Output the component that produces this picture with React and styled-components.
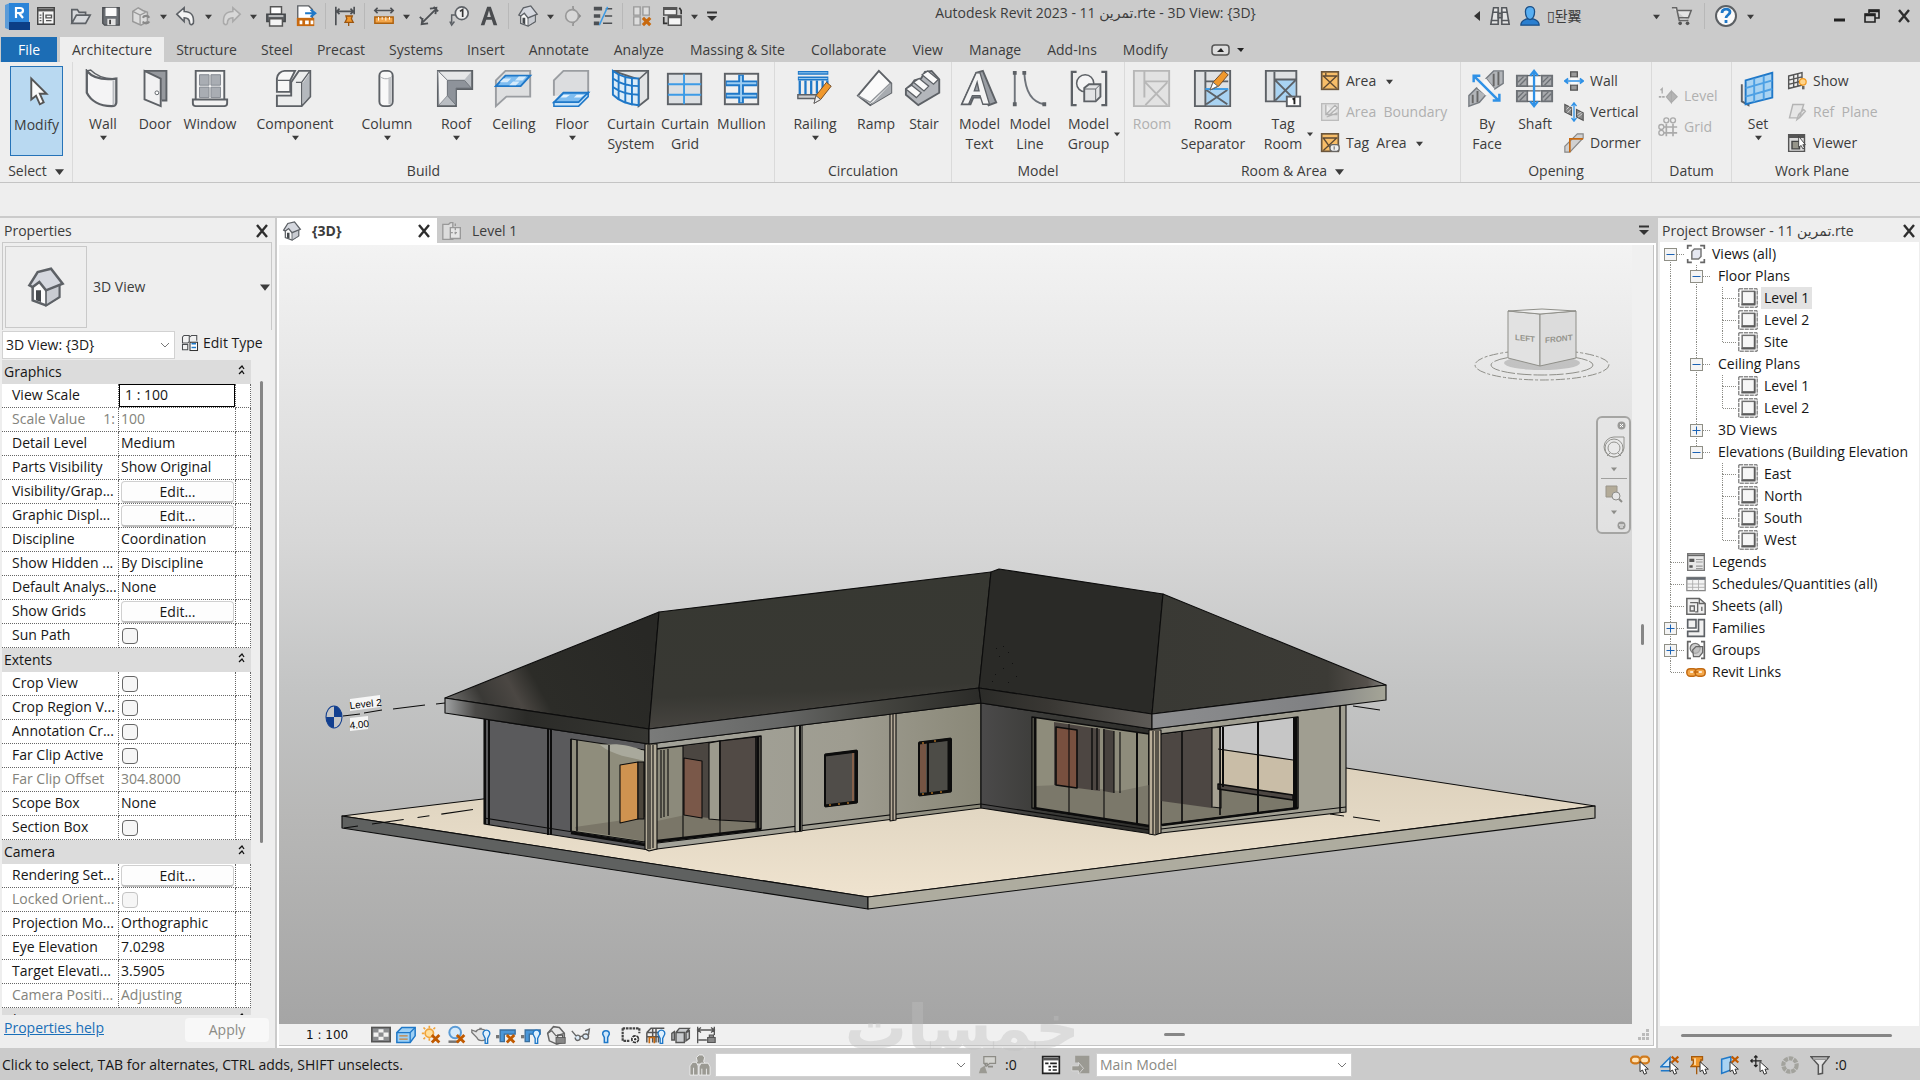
import React, { useState } from "react";
import styled, { createGlobalStyle } from "styled-components";

const GlobalStyle = createGlobalStyle`
  * { box-sizing: border-box; }
  body {
    margin: 0;
    background: #cbcbcb;
    color: #3c3c3c;
    font-family: "Open Sans", "Noto Sans", "DejaVu Sans", "Noto Sans CJK KR", sans-serif;
    font-size: 14px;
    line-height: 20px;
  }
  button, select, input {
    font: inherit;
    color: inherit;
    margin: 0;
  }
  svg { display: block; flex: none; }
`;

/* ---------- icons ---------- */

const G = "#5d6166";
const B = "#1f78c8";
const LB = "#9ccdf2";
const O = "#c8690f";

const cross = <path d="M13 12l9 9M22 12l-9 9" stroke="#c05a00" strokeWidth="3.4" />;
const bulb = <path d="M15 12a4 4 0 1 1 7 0l-2 4v6h-3v-6z" fill="#dff0fd" stroke={B} strokeWidth="1.6" />;
const cursor = <path d="M12 8v12l3-2 2 5 3-1-2-5h4z" fill="#fff" stroke="#333" strokeWidth="1.2" />;
const pencil = (
  <>
    <path d="M20 36l2-8L33 14l5 4-11 14z" fill="#f0982c" stroke="#6d4a2a" />
    <path d="M20 36l2-8 5 4z" fill="#eee" stroke={G} />
  </>
);

const big = {
  modify: <path d="M15 9v22l5-4 4 9 4-2-4-9h7z" fill="#fafafa" stroke="#555" strokeWidth="2" />,
  wall: (
    <>
      <path d="M4 2c7 8 17 10 31 8v25c0 3-2 4-5 4C17 39 8 33 4 25z" fill="#f4f4f5" stroke={G} strokeWidth="2.4" />
      <path d="M32 12v26" stroke="#b9bcc0" strokeWidth="2" />
      <path d="M4 2l4-1c7 7 15 10 27 9" fill="none" stroke={G} strokeWidth="1.5" />
    </>
  ),
  door: (
    <>
      <path d="M10 2h23v31h-5" fill="#96999e" stroke={G} strokeWidth="2" />
      <path d="M10 2l17 8v29L10 32z" fill="#f1f1f2" stroke={G} strokeWidth="2" />
      <circle cx="23" cy="25" r="2" fill="#fff" stroke={G} />
    </>
  ),
  window: (
    <>
      <path d="M6 2h30v31H6z" fill="#f6f6f6" stroke={G} strokeWidth="2" />
      <path d="M10 6h10v11H10zM22 6h10v11H22zM10 19h10v11H10zM22 19h10v11H22z" fill="#a9adb3" stroke="#83888f" />
      <path d="M3 32h36v4c0 2-1 3-3 3H6c-2 0-3-1-3-3z" fill="#f2f2f2" stroke={G} strokeWidth="2" />
    </>
  ),
  component: (
    <>
      <path d="M2 39V28h15V14l8-12h12v27l-9 10z" fill="#eceded" stroke={G} strokeWidth="2" />
      <path d="M2 24V10c0-4 4-8 8-8h11l-5 10v12z" fill="#f7f7f7" stroke={G} strokeWidth="2" />
      <path d="M29 15l7-10v24l-7 8z" fill="#b4b8bd" />
      <path d="M3 12h13M22 14h6l8-11M28 14v25" fill="none" stroke={G} strokeWidth="1.4" />
    </>
  ),
  column: (
    <>
      <rect x="13" y="2" width="14" height="37" rx="5" fill="#f8f8f8" stroke={G} strokeWidth="2" />
      <path d="M14 8c3 3 9 3 12 0" fill="none" stroke="#a2a5aa" />
      <path d="M24 9v28" stroke="#c3c5c8" strokeWidth="3" />
    </>
  ),
  roof: (
    <>
      <path d="M2 2h36v19H21v18H2z" fill="#b9bdc2" stroke={G} strokeWidth="2" />
      <path d="M2 2l10 10v16L3 38z" fill="#f3f3f3" stroke="#888c92" />
      <path d="M12 12h18l7 8H21v18l-9-10z" fill="#8e939a" stroke="#71767c" />
      <path d="M4 3h33l-7 8H12z" fill="#e6e7e8" />
    </>
  ),
  ceiling: (
    <>
      <path d="M2 12L12 2h26v27H13L2 39z" fill="#dedfe0" stroke="#9a9da1" strokeWidth="2" />
      <path d="M12 7h26L28 18H2z" fill="#7fbdf0" stroke={B} strokeWidth="2" />
      <path d="M10 10h8l-4 4H6zM26 8h8l-4 4h-8zM20 13h7l-4 4h-7z" fill="#d6ebfb" />
    </>
  ),
  floor: (
    <>
      <path d="M2 28V12L12 2h26v25" fill="#dcdddf" stroke="#9a9da1" strokeWidth="2" />
      <path d="M12 25h26L28 35H2z" fill="#7fbdf0" stroke={B} strokeWidth="2" />
      <path d="M2 35h26l10-10v4L28 39H2z" fill="#c8e4fa" stroke={B} strokeWidth="1.6" />
      <path d="M12 27h7l-4 3H9zM26 27h8l-4 3h-7z" fill="#e3f2fd" />
    </>
  ),
  curtainSystem: (
    <>
      <path d="M2 2h37v29l-10 8V11z" fill="#e3e4e5" stroke={G} strokeWidth="2" />
      <path d="M2 2c8 6 16 8 27 8v28C16 37 8 33 2 27z" fill="#dcecf8" stroke={B} strokeWidth="2" />
      <path d="M2 10c8 6 16 8 27 8M2 19c8 6 16 8 27 8M8 6v26M15 9v27M22 10v28" fill="none" stroke={B} strokeWidth="2" />
      <path d="M29 11l10-9" stroke={G} strokeWidth="1.6" />
    </>
  ),
  curtainGrid: (
    <>
      <rect x="3" y="5" width="35" height="32" fill="#dcdfe2" stroke={G} strokeWidth="2" />
      <path d="M3 16h35M3 27h35M20 5v32" stroke="#3c9be6" strokeWidth="2" />
    </>
  ),
  mullion: (
    <>
      <rect x="3" y="5" width="35" height="32" fill="#f0f0f0" stroke={G} strokeWidth="2" />
      <path d="M4 15h33M4 28h33M20 6v30" stroke={B} strokeWidth="6" />
      <path d="M5 15h31M5 28h31M20 7v28" stroke={LB} strokeWidth="2" />
    </>
  ),
  railing: (
    <>
      <path d="M3 4h32M3 10h32" stroke={B} strokeWidth="4" />
      <path d="M4 4h30M4 10h30" stroke={LB} strokeWidth="1" />
      <path d="M5 12v16M11 12v16M17 12v16M23 12v14M29 12v10M34 12v4" stroke={B} strokeWidth="2.4" />
      <path d="M3 27h20v4H3z" fill="#ccc" stroke={G} strokeWidth="1.5" />
      {pencil}
    </>
  ),
  ramp: (
    <>
      <path d="M2 28L24 2l13 13v10L15 38z" fill="#fafafa" stroke={G} strokeWidth="2" />
      <path d="M15 38l22-23v10z" fill="#a7abb0" />
      <path d="M2 28l13 7 21-20" fill="none" stroke="#91959a" strokeWidth="1.4" />
    </>
  ),
  stair: (
    <>
      <path d="M2 21l6-5 3-4 7-2 4-7 7-1 8 9v14L15 38 2 27z" fill="#b3b6bb" stroke={G} strokeWidth="2" />
      <path d="M2 21l6-4 10 8-5 5zM10 14l6-4 10 8-5 5zM19 6l6-4 11 9-5 5z" fill="#fafafa" stroke={G} strokeWidth="1.3" />
    </>
  ),
  modelText: (
    <>
      <path d="M2 37L17 4l7-2 14 33-8 3-4-8H14l-3 7z" fill="#9a9ea4" stroke={G} strokeWidth="2" />
      <path d="M2 37L17 4h4l10 33h-7l-3-9h-8l-4 9zM15 23h5l-2-9z" fill="#f4f4f4" stroke={G} strokeWidth="1.4" />
    </>
  ),
  modelLine: (
    <>
      <path d="M5 4v33M15 4c1 19 8 31 21 33" fill="none" stroke="#6f747b" strokeWidth="2" />
      <path d="M3 2h4v4H3zM3 35h4v4H3zM13 2h4v4h-4zM34 35h4v4h-4z" fill={G} />
    </>
  ),
  modelGroup: (
    <>
      <path d="M8 3H3v35h5M34 3h5v35h-5" fill="none" stroke={G} strokeWidth="2.4" />
      <circle cx="17" cy="15" r="9" fill="#f4f4f5" stroke={G} strokeWidth="1.6" />
      <path d="M16 20l5-4h12v13l-5 5H16z" fill="#e2e3e5" stroke={G} strokeWidth="2" />
      <path d="M16 21h12v12M28 21l5-5" fill="none" stroke={G} />
    </>
  ),
  room: (
    <>
      <path d="M2 2h37v37H2z" fill="#e2e2e2" stroke="#b7b7b7" strokeWidth="2" />
      <path d="M13 2v28M13 13h25M14 14l23 24M37 14L14 38" fill="none" stroke="#b7b7b7" strokeWidth="2" />
    </>
  ),
  roomSep: (
    <>
      <path d="M2 2h37v37H2z" fill="#dfe1e3" stroke={G} strokeWidth="2" />
      <path d="M14 21h24v17H14z" fill="#a9d3f2" />
      <path d="M13 3v36M13 13h24M14 22l22 15M36 22L14 37" stroke={G} strokeWidth="2" />
      <path d="M13 21h24" stroke="#3c9be6" strokeWidth="2" />
      <path d="M18 22l3-8L32 2l5 4-10 12z" fill="#f0982c" stroke="#6d4a2a" />
      <path d="M18 22l3-8 5 4z" fill="#fff" stroke={G} />
    </>
  ),
  tagRoom: (
    <>
      <path d="M3 2h32v32H3z" fill="#dfe1e3" stroke={G} strokeWidth="2" />
      <path d="M13 11h21v22H13z" fill="#a9d3f2" />
      <path d="M12 3v31M12 11h23M13 12l21 21M34 12L13 33" stroke={G} strokeWidth="2" />
      <rect x="25" y="29" width="14" height="10" fill="#fff" stroke={G} strokeWidth="2" />
      <path d="M31 32l2-1v6" fill="none" stroke="#222" strokeWidth="2" />
    </>
  ),
  byFace: (
    <>
      <path d="M2 39V28l8-8 10 7-7 8zM20 10l8-8h10v13l-9 6z" fill="#b3b6ba" stroke="#777c82" strokeWidth="1.5" />
      <path d="M11 20l9-10 9 11-9 7z" fill="#f6f6f6" />
      <path d="M6 27v9M11 23v12M28 5v13M33 3v14" stroke="#666" strokeWidth="2" />
      <path d="M8 8l25 25M7 14V7h7M27 33h7v-7" fill="none" stroke="#2f91e6" strokeWidth="2.6" />
    </>
  ),
  shaft: (
    <>
      <path d="M2 7h11v11H2zM28 7h11v11H28zM2 23h11v11H2zM28 23h11v11H28z" fill="#a7a9ac" stroke="#6d7176" strokeWidth="2" />
      <path d="M3 14l6-6M5 17l7-7M29 14l6-6M31 17l7-7M3 30l6-6M5 33l7-7M29 30l6-6M31 33l7-7" stroke="#6d7176" strokeWidth="1.4" />
      <path d="M14 7h13v11H14zM14 23h13v11H14z" fill="#fafafa" />
      <path d="M13 7h14M13 18h14M13 23h14M13 34h14" stroke={G} strokeWidth="1.4" />
      <path d="M20 2v37M16 7l4-5 4 5M16 34l4 5 4-5" fill="none" stroke="#2f91e6" strokeWidth="2.4" />
    </>
  ),
  set: (
    <>
      <path d="M4 16v18l7 4V20" fill="#e5e5e5" stroke={G} strokeWidth="2" />
      <path d="M8 12l28-8v26L8 37z" fill="#a9d3f2" stroke={B} strokeWidth="2" />
      <path d="M8 20l28-8M8 29l28-8M17 10v25M27 7v25" stroke="#4da0e4" strokeWidth="2" />
    </>
  ),
};

const houseShape = (
  <>
    <path d="M4 11v9l8 3 8-5v-9l-7-6z" fill="#fafafa" stroke={G} strokeWidth="1.5" />
    <path d="M12 14l8-4v8l-8 5z" fill="#c9ccd2" stroke={G} />
    <path d="M2 11l5-8 8-2 7 9-10 4-4-5-4 3z" fill="#d5d8df" stroke={G} strokeWidth="1.5" />
    <path d="M6 14h3v7l-3-1z" fill="#44484c" />
  </>
);

const small = {
  start: (
    <>
      <path d="M3 3h18v18H3z" fill="#f7f7f7" stroke="#444" strokeWidth="1.6" />
      <path d="M3 4h18v3H3z" fill="#555" />
      <path d="M9 8v13M5 11h2M5 14h2M5 17h2M12 11h6v3h-6zM12 17h6" fill="none" stroke="#555" strokeWidth="1.5" />
    </>
  ),
  open: <path d="M2 20V5h6l2 3h7v3M2 20l5-9h15l-5 9z" fill="#d7d9dc" stroke={G} strokeWidth="1.8" />,
  save: (
    <>
      <path d="M3 3h18v19H5l-2-2z" fill="#6b6f74" stroke="#494c50" strokeWidth="1.4" />
      <path d="M6 3h12v9H6z" fill="#fafafa" />
      <path d="M8 15h9v7H8z" fill="#e2e2e2" />
      <path d="M10 16h2v5h-2z" fill="#444" />
    </>
  ),
  sync: (
    <>
      <path d="M3 7l6-4 5 3 5 2v10l-7 4-9-4z" fill="#dcdcdc" stroke="#999" strokeWidth="1.6" />
      <path d="M3 7l8 4 6-3M11 11v10" fill="none" stroke="#999" strokeWidth="1.4" />
      <path d="M14 14a4 4 0 0 1 7 0M21 18a4 4 0 0 1-7 0" fill="none" stroke="#888" strokeWidth="2.4" />
    </>
  ),
  undo: <path d="M2 10l8-7v4c8 0 11 5 10 13-2 2-3 2-4 0 0-4-2-6-6-6v4z" fill="#f4f4f4" stroke={G} strokeWidth="1.7" />,
  redo: <path d="M22 10l-8-7v4c-8 0-11 5-10 13 2 2 3 2 4 0 0-4 2-6 6-6v4z" fill="#d8d8d8" stroke="#aaa" strokeWidth="1.7" />,
  print: (
    <>
      <path d="M6 2h12v8H6z" fill="#fff" stroke="#555" strokeWidth="1.6" />
      <path d="M2 10h20v8H2z" fill="#5c6064" stroke="#44474a" strokeWidth="1.6" />
      <path d="M5 15h14v8H5z" fill="#f4f4f4" stroke="#555" strokeWidth="1.6" />
      <path d="M4 12h16" stroke="#ddd" strokeWidth="1.6" />
    </>
  ),
  pdf: (
    <>
      <path d="M3 1h12l4 4v10H3z" fill="#fff" stroke={G} strokeWidth="1.5" />
      <path d="M11 9h10M17 5l5 4-5 4" fill="none" stroke={B} strokeWidth="2.4" />
      <path d="M2 14h19v9H2z" fill={O} />
      <path d="M5 19h3M11 19h4M17 19h3" stroke="#fff" strokeWidth="4" />
    </>
  ),
  dimPin: (
    <>
      <path d="M2 2v20M22 2v8M3 7h18M6 4L3 7l3 3M18 4l3 3-3 3" fill="none" stroke="#4d5054" strokeWidth="1.8" />
      <path d="M13 12h7l-1 3 2 4h-9l2-4zM16 19v4" fill="#f0982c" stroke="#9b5510" strokeWidth="1.4" />
    </>
  ),
  measure: (
    <>
      <path d="M2 6h20M5 3L2 6l3 3M19 3l3 3-3 3" fill="none" stroke="#4d5054" strokeWidth="1.8" />
      <path d="M2 13h20v7H2z" fill="#f3a64a" stroke="#ad6210" strokeWidth="1.6" />
      <path d="M6 13v4M10 13v3M14 13v4M18 13v3" stroke="#fff" />
    </>
  ),
  aligned: <path d="M5 19L19 5M13 4l7-1-1 7M11 20l-7 1 1-7M2 13l3 3M17 2l5 5" fill="none" stroke="#4d5054" strokeWidth="2" />,
  tag: (
    <>
      <circle cx="15" cy="9" r="7" fill="#eee" stroke={G} strokeWidth="1.8" />
      <path d="M13 7l3-2v8" fill="none" stroke="#333" strokeWidth="1.8" />
      <path d="M8 11H4v9M2 18l2 4 3-4" fill="none" stroke={G} strokeWidth="1.6" />
    </>
  ),
  text: <path d="M3 22L10 2h4l7 20h-4l-2-6H9l-2 6zM10 13h4l-2-7z" fill="#4a4c4f" fillRule="evenodd" />,
  house: houseShape,
  sectionHead: (
    <>
      <path d="M12 3l9 9-9 9z" fill="#8a8a8a" />
      <circle cx="11" cy="12" r="7" fill="#d8d8d8" stroke="#999" strokeWidth="1.8" />
      <path d="M12 1v3M12 20v3" stroke="#888" strokeWidth="1.5" />
    </>
  ),
  thin: (
    <>
      <path d="M2 4h9M2 12h7M2 20h6" stroke="#4d5054" strokeWidth="4" />
      <path d="M15 4h7M14 12h8M12 20h10" stroke="#4d5054" strokeWidth="1.6" />
      <path d="M17 2L8 22" stroke="#3c9be6" strokeWidth="1.6" />
    </>
  ),
  closeWin: (
    <>
      <path d="M3 2h7v9H3zM13 2h7v9h-7zM3 13h7v9H3z" fill="#ddd" stroke="#999" strokeWidth="1.5" />
      <path d="M13 14l8 8M21 14l-8 8" stroke={O} strokeWidth="3.4" />
    </>
  ),
  switchWin: (
    <>
      <path d="M3 3h14v8H3z" fill="#eee" stroke="#555" strokeWidth="1.6" />
      <path d="M8 12h14v10H8z" fill="#f6f6f6" stroke="#555" strokeWidth="1.6" />
      <path d="M3 4h14M8 13h14" stroke="#555" strokeWidth="3" />
      <path d="M3 13v7h4M20 3l2 3v4" fill="none" stroke="#333" strokeWidth="1.8" />
    </>
  ),
  binoculars: (
    <>
      <path d="M2 21L4 9l1-6h5v18zM22 21L20 9l-1-6h-5v18z" fill="#e4e4e4" stroke="#55585c" strokeWidth="1.7" />
      <path d="M10 9h4v5h-4zM2 17h8M14 17h8M4 8h6M14 8h6" fill="#999" stroke="#55585c" strokeWidth="1.6" />
    </>
  ),
  user: (
    <>
      <path d="M2 22c0-5 4-6 7-7h6c3 1 7 2 7 7z" fill="#2a7fd0" stroke="#1a4f87" strokeWidth="1.4" />
      <path d="M7 7c0-7 10-7 10 0 0 5-2 8-5 9-3-1-5-4-5-9z" fill="#57aef2" stroke="#1a4f87" strokeWidth="1.4" />
    </>
  ),
  cart: (
    <>
      <path d="M1 3h5l3 14h10M7 6h15l-3 8H8" fill="#e4e4e4" stroke="#666" strokeWidth="1.7" />
      <circle cx="10" cy="20" r="2" fill="#555" />
      <circle cx="18" cy="20" r="2" fill="#555" />
    </>
  ),
  help: (
    <>
      <circle cx="12" cy="12" r="10" fill="#fafafa" stroke="#5c6064" strokeWidth="2" />
      <path d="M8 9c0-5 8-5 8-1 0 3-4 3-4 6M12 16v3" fill="none" stroke={B} strokeWidth="2.8" />
    </>
  ),
  area: (
    <>
      <rect x="2" y="1" width="20" height="21" fill="#f7bd68" stroke="#6b563c" strokeWidth="2" />
      <path d="M7 2v4M3 6h18M4 6l16 15M20 6L4 21" fill="none" stroke="#5e4a34" strokeWidth="1.6" />
    </>
  ),
  areaBoundary: (
    <>
      <rect x="2" y="2" width="20" height="20" fill="#e0e0e0" stroke="#bcbcbc" strokeWidth="1.6" />
      <path d="M7 3v12h14M8 18l13-5M8 14L18 4l3 3L11 16z" fill="#eee" stroke="#b2b2b2" strokeWidth="1.6" />
    </>
  ),
  tagArea: (
    <>
      <rect x="2" y="1" width="20" height="21" fill="#f7bd68" stroke="#6b563c" strokeWidth="2" />
      <path d="M3 6h18M4 6l10 14M20 6L4 21" fill="none" stroke="#5e4a34" strokeWidth="1.6" />
      <rect x="12" y="14" width="11" height="8" rx="3" fill="#eee" stroke="#666" strokeWidth="1.6" />
      <path d="M17 16v4" stroke="#444" />
    </>
  ),
  openWall: (
    <>
      <path d="M8 1h8v6H8zM8 17h8v6H8z" fill="#999" stroke="#555" strokeWidth="1.6" />
      <path d="M8 8h8v8H8z" fill="#fafafa" />
      <path d="M1 12h22M5 9l-4 3 4 3M19 9l4 3-4 3" fill="none" stroke="#2f91e6" strokeWidth="2" />
    </>
  ),
  vertical: (
    <>
      <path d="M1 3l8 4v9l-8-4zM15 9l8 4v9l-8-4z" fill="#888" stroke="#555" strokeWidth="1.4" />
      <path d="M3 9l4-4M4 13l5-5M16 15l5-3M17 18l5-4" stroke="#ddd" />
      <path d="M12 1v22M9 5l3-4 3 4M9 19l3 4 3-4" fill="none" stroke="#2f91e6" strokeWidth="1.6" />
    </>
  ),
  dormer: (
    <>
      <path d="M1 23v-7L16 1h7v5L7 23z" fill="#d0d0d0" stroke="#888" strokeWidth="1.4" />
      <path d="M7 23V7h16" fill="none" stroke={O} strokeWidth="2" />
    </>
  ),
  level: (
    <>
      <path d="M3 5l2-2v6" fill="none" stroke="#aaa" strokeWidth="1.6" />
      <path d="M1 13h8" stroke="#aaa" strokeWidth="2" strokeDasharray="3 1" />
      <path d="M10 13l6-7v14zM16 6l7 7-7 7" fill="#b4b4b4" stroke="#aaa" strokeWidth="1.4" />
    </>
  ),
  grid: (
    <>
      <path d="M10 8v15M18 8v15M7 12h16M7 19h16" stroke="#aaa" strokeWidth="2" />
      <g fill="#eee" stroke="#aaa" strokeWidth="1.6">
        <circle cx="10" cy="4" r="3" />
        <circle cx="18" cy="4" r="3" />
        <circle cx="4" cy="12" r="3" />
        <circle cx="4" cy="19" r="3" />
      </g>
    </>
  ),
  show: (
    <>
      <path d="M2 6l16-4v15L2 21zM2 11l16-4M2 16l16-4M8 5v14M13 4v14" fill="#eee" stroke="#555" strokeWidth="1.7" />
      <circle cx="19" cy="13" r="4" fill="#ffd48a" stroke="#f39b22" strokeWidth="1.5" />
      <path d="M18 18h3v4h-3z" fill="#666" />
    </>
  ),
  refPlane: <path d="M7 3h13l-5 16H3zM12 21l2-6 6-6 2 2-6 7z" fill="#e6e6e6" stroke="#b4b4b4" strokeWidth="1.7" />,
  viewer: (
    <>
      <path d="M2 2h19v20H2z" fill="#dcdcdc" stroke="#555" strokeWidth="1.7" />
      <path d="M2 4h19" stroke="#555" strokeWidth="4" />
      <path d="M6 10h9v9H6z" fill="#96958a" stroke="#444" strokeWidth="1.7" />
      <path d="M14 4v13l3-2 2 4 2-1-2-4h3z" fill="#fff" stroke="#333" />
    </>
  ),
  editType: (
    <>
      <path d="M2 4l2-2h7v8l-2 2H2zM12 4l2-2h7v7M2 14h7v7H2z" fill="#f2f2f2" stroke="#4a4d50" strokeWidth="1.4" />
      <rect x="12" y="11" width="10" height="11" fill="#fff" stroke="#333" strokeWidth="1.4" />
      <path d="M14 14h6v-2h-6z" fill={B} />
      <path d="M14 18h6" stroke={B} strokeWidth="2" />
    </>
  ),
  plan: (
    <>
      <path d="M1 4h7l2-2h3v20H1z" fill="#dcdcdc" stroke="#999" strokeWidth="1.6" />
      <path d="M10 8h12v13H10z" fill="#e6e6e6" stroke="#999" strokeWidth="1.6" />
      <path d="M16 3v14M10 14h8" stroke="#999" strokeWidth="1.6" strokeDasharray="3 2" />
    </>
  ),
  views: (
    <>
      <path d="M2 6V2h5M17 2h5v4M22 18v4h-5M7 22H2v-4" fill="none" stroke="#666" strokeWidth="2" />
      <path d="M7 9l3-3h8v9l-3 3H7z" fill="#e6e8f2" stroke="#777" strokeWidth="1.8" />
    </>
  ),
  sheet: (
    <>
      <rect x="1" y="1" width="22" height="22" fill="none" stroke="#555" strokeWidth="1.2" strokeDasharray="5 1" />
      <rect x="5" y="4" width="15" height="15" fill="#f6f6f6" stroke="#707070" strokeWidth="1.8" />
      <path d="M20 4v16H4" fill="none" stroke="#5c5c5c" strokeWidth="2" />
    </>
  ),
  legends: (
    <>
      <path d="M2 2h20v20H2z" fill="#e7e7e7" stroke="#777" strokeWidth="1.6" />
      <path d="M2 3h20v2H2z" fill="#666" />
      <path d="M4 8h6v4H4zM4 16h4v3H4z" fill="#555" />
      <path d="M12 9h8M12 12h8M12 17h8M12 20h8" stroke="#999" strokeWidth="1.4" />
    </>
  ),
  schedule: (
    <>
      <path d="M1 4h22v16H1z" fill="#f3f3f3" stroke="#888" strokeWidth="1.5" />
      <path d="M1 4h22v3H1z" fill="#666b72" />
      <path d="M1 12h22M1 16h22M8 7v13M15 7v13" stroke="#aaa" />
    </>
  ),
  sheets: (
    <>
      <path d="M1 3h15l7 6v13H1z" fill="#efefef" stroke="#666" strokeWidth="1.8" />
      <path d="M16 3v6h7M5 8h9v11h-3M5 18v-6h5v6zM19 13v5" fill="none" stroke="#666" strokeWidth="1.6" />
    </>
  ),
  families: <path d="M2 2h10v10H2zM15 2h7v20H2v-6h13z" fill="#f1f1f1" stroke="#5d6166" strokeWidth="2" />,
  groups: (
    <>
      <path d="M6 2H2v20h4M18 2h4v20h-4" fill="none" stroke="#666" strokeWidth="2" />
      <circle cx="11" cy="10" r="6" fill="#ccc" stroke="#777" strokeWidth="1.6" />
      <path d="M8 12l4-4h8v7l-4 5H9z" fill="#bbb" fillOpacity="0.7" stroke="#666" strokeWidth="1.5" />
    </>
  ),
  link: (
    <>
      <rect x="1" y="8" width="12" height="9" rx="4" fill="#f5a94b" stroke="#c26a12" strokeWidth="1.8" />
      <rect x="11" y="8" width="12" height="9" rx="4" fill="#f5a94b" stroke="#c26a12" strokeWidth="1.8" />
      <path d="M5 12h4M15 12h4" stroke="#fff" strokeWidth="2" />
      <path d="M9 12h6" stroke="#c26a12" strokeWidth="2" />
    </>
  ),
  detail: (
    <>
      <rect x="1" y="3" width="22" height="17" fill="#8b8d90" stroke="#555" strokeWidth="2" />
      <path d="M9 5h6v4H9zM3 9h6v5H3zM15 9h6v5h-6zM9 14h6v4H9z" fill="#f1f1f1" />
    </>
  ),
  style: (
    <>
      <path d="M1 9l6-6h16v10l-6 8H1z" fill="#9ed0f5" stroke={B} strokeWidth="1.8" />
      <path d="M1 9h16v12M17 9l6-6" fill="none" stroke={B} strokeWidth="1.5" />
      <path d="M4 13h10M4 17h10" stroke="#c98138" strokeWidth="1.6" />
    </>
  ),
  sun: (
    <>
      <circle cx="10" cy="10" r="5" fill="#ffdf9c" stroke="#f1a43a" strokeWidth="2" />
      <path d="M10 1v3M1 10h3M3 3l2 2M17 3l-2 2M3 17l2-2M10 16v3" stroke="#f1a43a" strokeWidth="2" />
      {cross}
    </>
  ),
  shadow: (
    <>
      <circle cx="11" cy="9" r="7" fill="#d5eafb" stroke="#5a9bd6" strokeWidth="2.4" />
      <path d="M3 20h12" stroke="#777" strokeWidth="3" />
      {cross}
    </>
  ),
  teapot: (
    <>
      <path d="M1 6l5 2c2-4 10-4 12 0l1 7c-2 5-10 5-12 0L1 9zM10 4h3" fill="#e4e4e4" stroke="#777" strokeWidth="1.6" />
      {bulb}
    </>
  ),
  crop: (
    <>
      <path d="M0 12h4v4H0z" fill="#777" />
      <path d="M5 20V6h18v5H10v9z" fill="#4b97d9" stroke="#3a6f9e" strokeWidth="1.6" />
      {cross}
    </>
  ),
  cropShow: (
    <>
      <path d="M0 12h4v4H0z" fill="#777" />
      <path d="M5 20V6h18v5H10v9z" fill="#4b97d9" stroke="#3a6f9e" strokeWidth="1.6" />
      {bulb}
    </>
  ),
  lockHouse: (
    <>
      <path d="M2 10L9 2l7 1 6 7v10l-9 3-9-4z" fill="#e8e8e8" stroke="#666" strokeWidth="1.8" />
      <path d="M2 10l5-3 5 6 10-3" fill="none" stroke="#666" strokeWidth="1.5" />
      <rect x="12" y="15" width="11" height="7" fill="#888" stroke="#555" />
      <path d="M14 15v-3h6v3" fill="none" stroke="#555" strokeWidth="1.5" />
    </>
  ),
  glasses: (
    <path
      d="M1 7l5 6c3-2 5 0 5 3s-6 4-6-1M11 14l3-1c1-3 7-3 7 1s-6 4-7 0M21 12l1-7-5 2"
      fill="#dcebf8"
      stroke="#666"
      strokeWidth="1.7"
    />
  ),
  reveal: <path d="M8 11a4 4 0 1 1 8 0l-2 4v6h-4v-6z" fill="#cfe8fc" stroke={B} strokeWidth="1.8" />,
  temp: (
    <>
      <path d="M2 4h20v6M2 4v15h9" fill="none" stroke="#444" strokeWidth="2.6" strokeDasharray="3 1" />
      <circle cx="17" cy="17" r="4" fill="#fff" stroke="#333" strokeWidth="2" strokeDasharray="4 1" />
      <circle cx="17" cy="17" r="1.4" fill="#333" />
    </>
  ),
  analytic: (
    <>
      <path d="M1 9l5-5h16M1 9h14v12M1 9v12M8 4v17M1 14h14M12 4v17" fill="none" stroke="#555" strokeWidth="1.8" />
      <path d="M4 22v-7h6v7" fill="none" stroke={O} strokeWidth="2" />
      {bulb}
    </>
  ),
  displace: (
    <path
      d="M6 9h10v12H6zM6 9l4-5h12l-4 5M1 10l3-2v10H1zM18 9l4-2v9l-4 3z"
      fill="#c9cbce"
      stroke="#555"
      strokeWidth="1.7"
    />
  ),
  constraint: (
    <>
      <path d="M2 2v20M22 2v10M2 6h20M6 3L2 6l4 3M18 3l4 3-4 3M3 18h10" fill="none" stroke="#555" strokeWidth="1.6" />
      <path d="M14 15h9v6h-9zM16 15v-3h5v3" fill="#888" stroke="#555" strokeWidth="1.4" />
    </>
  ),
  people: (
    <>
      <path d="M9 8l-1-4 3-3h4l2 3-1 4 2 3H7z" fill="#9b9a93" stroke="#eee" />
      <path d="M1 23V13l3-4h4l2 4v10zM11 23v-9l2-4h8l2 4v9z" fill="#9b9a93" stroke="#eee" />
      <path d="M5 15v8M14 16v7M19 16v7" stroke="#eee" />
    </>
  ),
  request: (
    <>
      <path d="M7 2h14v8h-7l-3 3V10H7z" fill="#d4d4d0" stroke="#8d8c86" strokeWidth="1.5" />
      <path d="M1 22l2-6 5-3 3 9z" fill="#9b9a93" />
      <path d="M8 10l2 4M12 14h6" stroke="#8d8c86" strokeWidth="2" />
    </>
  ),
  options: (
    <>
      <path d="M2 2h20v20H2z" fill="#fff" stroke="#222" strokeWidth="2" />
      <path d="M2 5h20" stroke="#555" strokeWidth="3" />
      <path d="M5 10h4M11 10h8M9 14h3M14 14h5M9 18h3M14 18h5" stroke="#222" strokeWidth="2" />
    </>
  ),
  addOption: (
    <>
      <path d="M5 1h17v21H9V9H5z" fill="#9b9a93" />
      <path d="M1 13h8v-4l6 7-6 7v-4H1z" fill="#9b9a93" stroke="#ddd" />
    </>
  ),
  selLink: (
    <>
      <rect x="1" y="2" width="11" height="8" rx="4" fill="#ffe2b5" stroke="#d07a1c" strokeWidth="2.6" />
      <rect x="12" y="2" width="11" height="8" rx="4" fill="#ffe2b5" stroke="#d07a1c" strokeWidth="2.6" />
      {cursor}
    </>
  ),
  selUnder: (
    <>
      <path d="M1 14L12 3v11zM1 19h12" fill="#cfe6f8" stroke={B} strokeWidth="1.8" />
      <path d="M14 2l8 7M22 2l-8 7" stroke="#c05a00" strokeWidth="2.6" />
      {cursor}
    </>
  ),
  selPin: (
    <>
      <path d="M2 2h13v4h-2v4l3 4H1l3-4V6H2zM8 14v9" fill="#f0982c" stroke="#a65a0c" strokeWidth="1.6" />
      <path d="M6 4v8" stroke="#ffe2b5" strokeWidth="2" />
      {cursor}
    </>
  ),
  selFace: (
    <>
      <path d="M2 5l11-3v16L2 22z" fill="#a9d3f2" stroke={B} strokeWidth="1.8" />
      <path d="M14 2l8 7M22 2l-8 7" stroke="#c05a00" strokeWidth="2.6" />
      {cursor}
    </>
  ),
  selDrag: (
    <>
      <path d="M7 1v13M1 7h13M5 3l2-2 2 2M5 12l2 2 2-2M3 5L1 7l2 2" fill="none" stroke="#222" strokeWidth="1.5" />
      {cursor}
    </>
  ),
  gear: <circle cx="12" cy="12" r="8" fill="none" stroke="#a3a39d" strokeWidth="5" strokeDasharray="5 1" />,
  filter: (
    <>
      <path d="M1 2h22l-8 10v10l-5 1V12z" fill="#e3e3e3" stroke="#555" strokeWidth="1.8" />
      <path d="M4 5h16" stroke="#999" strokeWidth="2" />
    </>
  ),
};

const Icon = ({ name, size = 20 }) => (
  <svg width={size} height={size} viewBox="0 0 24 24" fill="none" aria-hidden="true">
    {small[name]}
  </svg>
);

const Tri = ({ size = 8, color = "#3c3c3c" }) => (
  <svg width={size} height={size} viewBox="0 0 8 8" aria-hidden="true">
    <path d="M0 2h8L4 7z" fill={color} />
  </svg>
);

const Cross = () => (
  <svg width="14" height="14" viewBox="0 0 14 14" aria-hidden="true">
    <path d="M2 1l10 12M12 1L2 13" stroke="#2e2e2e" strokeWidth="2.4" />
  </svg>
);

const Chevron = () => (
  <svg width="10" height="6" viewBox="0 0 10 6" aria-hidden="true">
    <path d="M1 1l4 4 4-4" fill="none" stroke="#777" />
  </svg>
);

/* ---------- shell ---------- */

const Page = styled.div`
  display: flex;
  flex-direction: column;
  height: 100vh;
  overflow: hidden;
  background: #cbcbcb;
`;

const Plain = styled.button`
  display: flex;
  align-items: center;
  justify-content: center;
  flex: none;
  padding: 0;
  border: 0;
  background: none;
`;

const TitleBar = styled.header`
  display: flex;
  height: 37px;
  padding-bottom: 5px;
`;

const Tools = styled.div`
  display: flex;
  align-items: center;
`;

const Tool = styled(Plain)`
  width: ${(p) => p.$w || 30}px;
  height: 28px;
`;

const Logo = styled(Plain)`
  width: 31px;
  justify-content: flex-start;
  padding-left: 4px;
`;

const StartTool = styled(Tool)`
  margin-right: 5px;
`;

const Split = styled.span`
  width: 1px;
  height: 26px;
  margin: 0 4px;
  background: #b8b8b8;
`;

const Title = styled.h1`
  flex: 1;
  margin: 0;
  padding-top: 3px;
  text-align: center;
  font-size: 14px;
  font-weight: 400;
  white-space: nowrap;
`;

const UserName = styled.span`
  width: 104px;
  padding-left: 2px;
  white-space: nowrap;
`;

const WindowButtons = styled.div`
  display: flex;
  align-items: center;
  gap: 17px;
  padding: 0 9px 0 76px;
`;

const TabRow = styled.nav`
  display: flex;
  height: 25px;
`;

const FileTab = styled(Plain)`
  width: 56px;
  margin: 0 3px 0 1px;
  background: #1c6db5;
  color: #fff;
`;

const RibbonTab = styled(Plain)`
  padding: 0 ${(p) => (p.$wide ? 13 : 12)}px;
  background: ${(p) => (p.$active ? "#eeeeee" : "none")};
`;

const Ribbon = styled.section`
  display: flex;
  height: 121px;
  background: #eeeeee;
  border-bottom: 1px solid #c4c4c4;
`;

const Group = styled.div`
  display: flex;
  flex-direction: column;
  flex: none;
  width: ${(p) => p.$w}px;
  border-right: 1px solid #dadada;

  &:last-child { border-right: 0; }
`;

const GroupBody = styled.div`
  display: flex;
  flex: 1;
`;

const GroupName = styled.div`
  display: flex;
  align-items: center;
  justify-content: center;
  gap: 8px;
  height: 22px;
`;

const BigButton = styled(Plain)`
  flex-direction: column;
  justify-content: flex-start;
  width: ${(p) => p.$w}px;
  padding-top: 7px;
  white-space: pre;
  color: ${(p) => (p.disabled ? "#b0b0b0" : "inherit")};
`;

const BigLabel = styled.span`
  display: flex;
  align-items: center;
  gap: 5px;
  padding-top: 5px;
  padding-left: ${(p) => (p.$side ? 11 : 0)}px;
`;

const ModifyButton = styled(BigButton)`
  margin: 4px 0 0 10px;
  height: 90px;
  padding-top: 3px;
  background: #b9d9f1;
  border: 1px solid #2673b8;
`;

const Stack = styled.div`
  display: flex;
  flex-direction: column;
  gap: 7px;
  padding: ${(p) => (p.$low ? "22px 0 0 6px" : "7px 0 0 0")};
  margin-left: ${(p) => p.$ml || 0}px;
`;

const SmallButton = styled(Plain)`
  justify-content: flex-start;
  gap: 6px;
  height: 24px;
  white-space: pre;
  color: ${(p) => (p.disabled ? "#b0b0b0" : "inherit")};
`;

const OptionsBar = styled.div`
  height: 33px;
  background: #eeeeee;
`;

const Main = styled.main`
  display: flex;
  flex: 1;
  min-height: 0;
  gap: 2px;
  padding-top: 2px;
`;

/* ---------- properties ---------- */

const Panel = styled.aside`
  display: flex;
  flex-direction: column;
  flex: none;
  width: ${(p) => p.$w}px;
  min-height: 0;
  background: #eeeeee;
`;

const PanelHead = styled.div`
  display: flex;
  align-items: center;
  justify-content: space-between;
  height: 24px;
  padding: 2px ${(p) => p.$end || 6}px 0 4px;
  white-space: nowrap;
`;

const TypeBox = styled.button`
  display: flex;
  align-items: center;
  height: 88px;
  margin: 0 3px 0 2px;
  padding: 0 1px 0 2px;
  background: none;
  border: 1px solid #c9c9c9;
  border-bottom: 0;
  text-align: left;

  span { flex: 1; padding-left: 6px; }
`;

const Thumb = styled.div`
  display: flex;
  align-items: center;
  justify-content: center;
  width: 82px;
  height: 82px;
  border: 1px solid #c9c9c9;
`;

const TypeRow = styled.div`
  display: flex;
  gap: 6px;
  height: 30px;
  padding: 1px 0 1px 2px;
  color: #1a1a1a;

  > button { gap: 4px; }
`;

const Picker = styled.div`
  display: grid;
  flex: none;
  width: ${(p) => p.$w}px;
  height: ${(p) => p.$h || 28}px;
  background: #fff;
  border: 1px solid #d2d2d2;

  select, svg { grid-area: 1 / 1; }
  svg { align-self: center; justify-self: end; margin-right: 4px; pointer-events: none; }
  select {
    appearance: none;
    width: 100%;
    padding: 0 24px 0 3px;
    border: 0;
    background: none;
    color: ${(p) => (p.$dim ? "#8a8a84" : "#1a1a1a")};
  }
`;

const PropsBody = styled.div`
  display: flex;
  align-items: flex-start;
  flex: 1;
  min-height: 0;
  overflow: hidden;
  padding-left: 2px;
`;

const PropTable = styled.table`
  width: 249px;
  table-layout: fixed;
  border-spacing: 0;
  background: #fff;
  color: #161616;

  th, td {
    height: 24px;
    padding: 0 0 0 2px;
    font-weight: 400;
    text-align: left;
    line-height: 20px;
    white-space: nowrap;
    overflow: hidden;
    border-bottom: 1px dotted #666;
    border-right: 1px dotted #666;
  }
  tbody th { padding-left: 10px; }
  output { display: block; padding-bottom: 2px; }
`;

const GroupRow = styled.tr`
  && th {
    padding: 0 6px 0 2px;
    background: #dcdcdc;
    border: 0;
  }
  div { display: flex; justify-content: space-between; }
`;

const PropRow = styled.tr`
  color: ${(p) => (p.$dim ? "#83837b" : "inherit")};

  label { display: flex; justify-content: space-between; padding: 0 3px 2px 0; }
`;

const ScaleInput = styled.input`
  display: block;
  width: calc(100% + 2px);
  height: 23px;
  margin-left: -2px;
  padding: 0 5px 2px;
  border: 1px solid #000;
  background: #fff;
`;

const EditButton = styled.button`
  display: block;
  width: calc(100% - 1px);
  height: 22px;
  padding: 0;
  line-height: 19px;
  background: #fdfdfd;
  border: 1px solid #d0d0d0;
  border-bottom: 2px solid #bdbdbd;
  border-radius: 4px;
`;

const Tick = styled.input`
  display: block;
  appearance: none;
  width: 16px;
  height: 16px;
  && { margin-left: 1px; }
  border: 1px solid ${(p) => (p.disabled ? "#c4c4c4" : "#666")};
  border-radius: 4px;
  background: #f6f6f6;
`;

const ScrollThumb = styled.div`
  width: ${(p) => p.$w || 3}px;
  height: ${(p) => p.$h || 3}px;
  margin: ${(p) => p.$m || 0};
  background: #868686;
  border-radius: 2px;
`;

const PanelFoot = styled.div`
  display: flex;
  justify-content: space-between;
  height: 33px;
  padding: 3px 6px 6px 4px;

  a { color: #1a6fb8; }
  button {
    width: 84px;
    border: 0;
    border-radius: 4px;
    background: #f8f8f8;
    color: #8c8c86;
  }
`;

/* ---------- document area ---------- */

const Doc = styled.section`
  display: flex;
  flex-direction: column;
  flex: 1;
  min-width: 0;
`;

const DocTabs = styled.div`
  display: flex;
  align-items: center;
  height: 25px;
`;

const DocTab = styled.div`
  display: flex;
  align-items: center;
  width: 160px;
  height: 25px;
  padding: 0 6px 0 5px;
  background: ${(p) => (p.$active ? "#fff" : "none")};

  button:first-child {
    font-weight: ${(p) => (p.$active ? 700 : 400)};
    gap: 10px;
  }
  button:last-child:not(:first-child) { margin-left: auto; }
`;

const DocFrame = styled.div`
  display: grid;
  flex: 1;
  min-height: 0;
  grid-template: minmax(0, 1fr) 22px / minmax(0, 1fr) 22px;
  border: 2px solid #fff;
  background: #f0f0f0;
`;

const Canvas = styled.div`
  position: relative;
  overflow: hidden;
  background: linear-gradient(#f3f3f3 0, #d7d7d7 38%, #c3c4c4 57%, #b7b7b6 74%, #a5a5a5 100%);

  > svg:first-child { width: 100%; height: 100%; }
`;

const Cube = styled.svg`
  position: absolute;
  top: 60px;
  right: 20px;
`;

const NavBar = styled.div`
  position: absolute;
  top: 171px;
  right: 1px;
  display: flex;
  flex-direction: column;
  align-items: center;
  width: 35px;
  height: 118px;
  padding: 3px;
  gap: 6px;
  border: 2px solid #a5a5a3;
  border-radius: 6px;
  background: rgba(232, 232, 232, 0.6);

  button:first-child, button:last-child { align-self: flex-end; }
  hr { width: 26px; margin: 0; border: 0; border-top: 1px solid #a0a09e; }
`;

const SideScroll = styled.div`
  display: flex;
  align-items: center;
  justify-content: center;
  border-right: 1px solid #c4c4c4;
`;

const ViewBar = styled.div`
  grid-column: 1 / -1;
  display: flex;
  align-items: center;
  padding: 0 3px 0 27px;
  border-right: 1px solid #c4c4c4;
  border-bottom: 1px solid #c4c4c4;
  color: #111;

  > span { width: 62px; font-family: "DejaVu Sans", sans-serif; font-size: 12px; }
  > i { margin-left: auto; }
`;

const ViewTool = styled(Plain)`
  width: 25px;
  height: 20px;
`;

/* ---------- project browser ---------- */

const Tree = styled.ul`
  flex: 1;
  margin: 0 1px 0 2px;
  padding: 1px 0 0 4px;
  list-style: none;
  background: #fff;
  color: #161616;
  overflow: hidden;
`;

const TreeRow = styled.li`
  display: flex;
  align-items: center;
  height: 22px;
  white-space: nowrap;
`;

const TreeName = styled.span`
  padding: 0 3px;
  margin-left: 3px;
  line-height: 22px;
  background: ${(p) => (p.$picked ? "#e3e3e3" : "none")};
`;

const BrowserFoot = styled.div`
  height: 22px;
  padding: 8px 28px 0 23px;
`;

/* ---------- status bar ---------- */

const StatusBar = styled.footer`
  display: flex;
  align-items: center;
  height: 32px;
  padding: 2px 7px 0 2px;
  color: #161616;
`;

const Hint = styled.span`
  width: 683px;
  white-space: nowrap;
`;

const Count = styled.span`
  width: ${(p) => p.$w}px;
`;

const Right = styled.div`
  display: flex;
  align-items: center;
  margin-left: auto;
`;

const Watermark = styled.div`
  position: fixed;
  left: 44%;
  bottom: 34px;
  height: 36px;
  color: rgba(190, 190, 190, 0.4);
  font: 700 62px/36px "DejaVu Sans", sans-serif;
  pointer-events: none;
`;

/* ---------- data ---------- */

const quick = [
  "open", "save", "sync", "v", "undo", "v", "redo", "v", "print", "pdf", "|", "dimPin", "|",
  "measure", "v", "aligned", "tag", "text", "|", "house", "v", "sectionHead", "thin", "|",
  "closeWin", "switchWin", "v",
];

const tabs = [
  "Architecture", "Structure", "Steel", "Precast", "Systems", "Insert", "Annotate", "Analyze",
  "Massing & Site", "Collaborate", "View", "Manage", "Add-Ins", "Modify",
];

const build = [
  ["wall", "Wall", 60, "down"],
  ["door", "Door", 44],
  ["window", "Window", 66],
  ["component", "Component", 104, "down"],
  ["column", "Column", 80, "down"],
  ["roof", "Roof", 58, "down"],
  ["ceiling", "Ceiling", 58],
  ["floor", "Floor", 58, "down"],
  ["curtainSystem", "Curtain\nSystem", 60],
  ["curtainGrid", "Curtain\nGrid", 48],
  ["mullion", "Mullion", 65],
];
const circulation = [
  ["railing", "Railing", 80, "down"],
  ["ramp", "Ramp", 42],
  ["stair", "Stair", 54],
];
const model = [
  ["modelText", "Model\nText", 55],
  ["modelLine", "Model\nLine", 46],
  ["modelGroup", "Model\nGroup", 71, "side"],
];
const room = [
  ["room", "Room", 54, "off"],
  ["roomSep", "Room\nSeparator", 68],
  ["tagRoom", "Tag\nRoom", 72, "side"],
];

const propGroups = [
  {
    name: "Graphics",
    rows: [
      ["View Scale", "scale"],
      ["Scale Value", "100", "dim"],
      ["Detail Level", "Medium"],
      ["Parts Visibility", "Show Original"],
      ["Visibility/Grap...", "edit"],
      ["Graphic Displ...", "edit"],
      ["Discipline", "Coordination"],
      ["Show Hidden ...", "By Discipline"],
      ["Default Analys...", "None"],
      ["Show Grids", "edit"],
      ["Sun Path", "tick"],
    ],
  },
  {
    name: "Extents",
    rows: [
      ["Crop View", "tick"],
      ["Crop Region V...", "tick"],
      ["Annotation Cr...", "tick"],
      ["Far Clip Active", "tick"],
      ["Far Clip Offset", "304.8000", "dim"],
      ["Scope Box", "None"],
      ["Section Box", "tick"],
    ],
  },
  {
    name: "Camera",
    rows: [
      ["Rendering Set...", "edit"],
      ["Locked Orient...", "tick", "dim"],
      ["Projection Mo...", "Orthographic"],
      ["Eye Elevation", "7.0298"],
      ["Target Elevati...", "3.5905"],
      ["Camera Positi...", "Adjusting", "dim"],
    ],
  },
  { name: "Identity Data", rows: [] },
];

// guides, one letter a column: m/M/L minus box, P plus box, | line, t tee, l elbow
const tree = [
  ["m", "Views (all)", "views"],
  ["|M", "Floor Plans"],
  ["||t", "Level 1", "sheet"],
  ["||t", "Level 2", "sheet"],
  ["||l", "Site", "sheet"],
  ["|M", "Ceiling Plans"],
  ["||t", "Level 1", "sheet"],
  ["||l", "Level 2", "sheet"],
  ["|P", "3D Views"],
  ["|L", "Elevations (Building Elevation"],
  ["| t", "East", "sheet"],
  ["| t", "North", "sheet"],
  ["| t", "South", "sheet"],
  ["| l", "West", "sheet"],
  ["t", "Legends", "legends"],
  ["t", "Schedules/Quantities (all)", "schedule"],
  ["t", "Sheets (all)", "sheets"],
  ["P", "Families", "families"],
  ["P", "Groups", "groups"],
  ["l", "Revit Links", "link"],
];

const viewTools = [
  "detail", "style", "sun", "shadow", "teapot", "crop", "cropShow", "lockHouse", "glasses",
  "reveal", "temp", "analytic", "displace", "constraint",
];

/* ---------- pieces ---------- */

function Big({ item }) {
  const [icon, label, w, mode] = item;
  return (
    <BigButton $w={w} disabled={mode === "off"}>
      <svg width="40" height="40" viewBox="0 0 42 42" fill="none" aria-hidden="true">{big[icon]}</svg>
      <BigLabel $side={mode === "side"}>
        {label}
        {mode === "side" && <Tri size={6} />}
      </BigLabel>
      {mode === "down" && <Tri size={7} />}
    </BigButton>
  );
}

function Small({ icon, label, drop, off }) {
  return (
    <SmallButton disabled={off}>
      <Icon name={icon} />
      {label}
      {drop && <Tri size={7} />}
    </SmallButton>
  );
}

function Guide({ type, last }) {
  const box = "mMPL".includes(type);
  const up = "|tlMPL".includes(type);
  const down = "|tmMP".includes(type);
  const across = type !== "|" && type !== " ";
  const w = last ? 22 : 26;
  return (
    <svg width={w} height="22" viewBox={`0 0 ${w} 22`} aria-hidden="true">
      <g stroke="#8c8c86" strokeDasharray="1 1" shapeRendering="crispEdges">
        {up && <path d="M6.5 0v11" />}
        {down && <path d="M6.5 11v11" />}
        {across && <path d="M7 11.5h14" />}
      </g>
      {box && (
        <>
          <rect x="0.5" y="5.5" width="12" height="12" fill="#f4f4f4" stroke="#8f8f86" />
          <path d="M2.5 11.5h8" stroke="#1b62b4" />
          {type === "P" && <path d="M6.5 7.5v8" stroke="#1b62b4" />}
        </>
      )}
    </svg>
  );
}

function PropValue({ kind, id, dim }) {
  const [scale, setScale] = useState("1 : 100");
  if (kind === "scale") return <ScaleInput id={id} value={scale} onChange={(e) => setScale(e.target.value)} />;
  if (kind === "edit") return <EditButton id={id}>Edit...</EditButton>;
  if (kind === "tick") return <Tick id={id} type="checkbox" disabled={dim} />;
  return <output id={id}>{kind}</output>;
}

const Double = () => (
  <svg width="7" height="20" viewBox="0 0 7 20" aria-hidden="true">
    <path d="M1 7l3-3 2 3M1 12l3-3 2 3" fill="none" stroke="#111" strokeWidth="1.3" />
  </svg>
);

function Properties() {
  return (
    <Panel $w={275}>
      <PanelHead>
        Properties
        <Plain aria-label="Close"><Cross /></Plain>
      </PanelHead>
      <TypeBox>
        <Thumb><Icon name="house" size={40} /></Thumb>
        <span>3D View</span>
        <Tri size={10} />
      </TypeBox>
      <TypeRow>
        <Picker $w={173}>
          <select aria-label="Instance"><option>{"3D View: {3D}"}</option></select>
          <Chevron />
        </Picker>
        <SmallButton>
          <Icon name="editType" size={18} />
          Edit Type
        </SmallButton>
      </TypeRow>
      <PropsBody>
        <PropTable>
          <colgroup>
            <col width="117" />
            <col width="117" />
            <col width="15" />
          </colgroup>
          <tbody>
            {propGroups.map((g) => (
              <React.Fragment key={g.name}>
                <GroupRow>
                  <th colSpan="3"><div>{g.name}<Double /></div></th>
                </GroupRow>
                {g.rows.map(([name, kind, dim]) => (
                  <PropRow key={name} $dim={dim}>
                    <th>
                      <label htmlFor={name}>
                        {name}
                        {name === "Scale Value" && <span>1:</span>}
                      </label>
                    </th>
                    <td><PropValue kind={kind} id={name} dim={!!dim} /></td>
                    <td />
                  </PropRow>
                ))}
              </React.Fragment>
            ))}
          </tbody>
        </PropTable>
        <ScrollThumb $h={462} $m="21px 0 0 9px" />
      </PropsBody>
      <PanelFoot>
        <a href="#help">Properties help</a>
        <button disabled>Apply</button>
      </PanelFoot>
    </Panel>
  );
}

function House() {
  return (
    <svg viewBox="279 245 1353 779" aria-label="3D model" stroke="#0c0c0c" strokeWidth="1.1" strokeLinejoin="round">
      <defs>
        <linearGradient id="hip" x1="0" y1="0.7" x2="1" y2="0.4">
          <stop offset="0" stopColor="#6e6d6b" />
          <stop offset="0.15" stopColor="#3a3936" />
          <stop offset="0.3" stopColor="#4b4743" />
          <stop offset="0.42" stopColor="#2c2c28" />
          <stop offset="1" stopColor="#282825" />
        </linearGradient>
        <linearGradient id="roofR" x1="0" y1="0" x2="1" y2="0">
          <stop offset="0" stopColor="#393934" />
          <stop offset="0.75" stopColor="#3c3b36" />
          <stop offset="0.92" stopColor="#56514c" />
          <stop offset="1" stopColor="#8a8a86" />
        </linearGradient>
        <linearGradient id="roofF" x1="0.45" y1="0" x2="0.55" y2="1">
          <stop offset="0" stopColor="#373832" />
          <stop offset="0.75" stopColor="#383833" />
          <stop offset="1" stopColor="#4a4743" />
        </linearGradient>
        <linearGradient id="fasL" x1="0" y1="0" x2="1" y2="0">
          <stop offset="0" stopColor="#a0a2a3" />
          <stop offset="0.15" stopColor="#4a4947" />
          <stop offset="0.4" stopColor="#2b2b28" />
          <stop offset="1" stopColor="#363632" />
        </linearGradient>
        <linearGradient id="fasF" x1="0" y1="0" x2="1" y2="0">
          <stop offset="0" stopColor="#7a7b7a" />
          <stop offset="0.4" stopColor="#666766" />
          <stop offset="0.7" stopColor="#44443f" />
          <stop offset="1" stopColor="#2b2b28" />
        </linearGradient>
        <linearGradient id="fasM" x1="0" y1="0" x2="1" y2="0">
          <stop offset="0" stopColor="#2b2b28" />
          <stop offset="0.4" stopColor="#393733" />
          <stop offset="1" stopColor="#5d5a56" />
        </linearGradient>
        <linearGradient id="fasR" x1="0" y1="0" x2="1" y2="0">
          <stop offset="0" stopColor="#8c8d8f" />
          <stop offset="0.7" stopColor="#808183" />
          <stop offset="1" stopColor="#a5a597" />
        </linearGradient>
        <linearGradient id="wallF" x1="0" y1="0" x2="1" y2="0">
          <stop offset="0" stopColor="#a3a39a" />
          <stop offset="0.6" stopColor="#9e9c90" />
          <stop offset="1" stopColor="#8a8878" />
        </linearGradient>
        <linearGradient id="wallD" x1="0" y1="0" x2="1" y2="0">
          <stop offset="0" stopColor="#4b4a4a" />
          <stop offset="0.4" stopColor="#3a3a37" />
          <stop offset="1" stopColor="#2e2e2b" />
        </linearGradient>
        <linearGradient id="slab" x1="0" y1="0" x2="0" y2="1">
          <stop offset="0" stopColor="#d9ccb6" />
          <stop offset="0.5" stopColor="#e2d7c3" />
          <stop offset="1" stopColor="#efe3cf" />
        </linearGradient>
      </defs>

      {/* slab */}
      <path d="M342 816L483 799 1080 727 1346 768 1595 806 868 897z" fill="url(#slab)" />
      <path d="M342 816L868 897V909L342 828z" fill="#5f6160" />
      <path d="M868 897L1595 806V818L868 909z" fill="#aeac9f" />
      <path d="M372 824L484 808M344 828l14-2" strokeDasharray="32 14 12 12" fill="none" />

      {/* left wing, short side */}
      <path d="M484 719L649 744V850L484 824z" fill="#5a5a5c" />
      <path d="M484 818L649 844" fill="none" />
      <path d="M485 719v105M489 720v105M548 729v106M551 729v106" strokeWidth="2" />
      <path d="M571 739L645 750V842L571 831z" fill="#8f8d7c" />
      <path d="M575 827L645 817V841L576 830z" fill="#7a7668" stroke="none" />
      <path d="M600 745c18-2 30 0 44 6v10c-14-4-30-5-44-16z" fill="#a9a99c" stroke="none" />
      <path d="M620 765L638 762V819L620 823z" fill="#cf9350" />
      <path d="M638 762h6v57h-6z" fill="#4c463c" />
      <path d="M571 739v92M577 740v91M609 745v90" strokeWidth="1.5" />
      <path d="M571 833L645 845" strokeWidth="2.4" />

      {/* left wing, long side */}
      <path d="M649 744L981 703V808L649 850z" fill="url(#wallF)" />
      <path d="M649 844L981 804" fill="none" />
      <path d="M656 749L761 736V829L656 842z" fill="#8c8a7b" strokeWidth="1.5" />
      <path d="M657 821L690 814 755 822V830L657 841z" fill="#7a7668" stroke="none" />
      <path d="M683 746L709 743V818L683 815z" fill="#4b4641" stroke="none" />
      <path d="M684 758L702 761V818L684 815z" fill="#7a5849" />
      <path d="M709 743L720 741V820L709 819z" fill="#9c9a8d" />
      <path d="M720 741L756 737V822L720 820z" fill="#514a45" />
      <path d="M661 750v68M664 750v67M668 749v67M683 746v93M720 741v94M756 737v93" />
      <path d="M657 841L761 829" strokeWidth="2.4" />
      <path d="M758 737v93" strokeWidth="3" />

      <path d="M825 755L857 751V802L825 806z" fill="#504d49" strokeWidth="2" />
      <path d="M853 753v48" stroke="#85604a" strokeWidth="2" />
      <path d="M825 806L857 802M825 755L857 751M856 751v52" strokeWidth="3" />
      <path d="M919 743L951 739V791L919 795z" fill="#4d4c47" strokeWidth="2" />
      <path d="M923 744v48" stroke="#755443" strokeWidth="6" />
      <path d="M928 743v50" strokeWidth="2" />
      <path d="M919 743L951 739M949 740v51M919 795L951 791" strokeWidth="3" />
      <path d="M829 805l2 0M838 804l2 0M847 803l2 0M922 794l2 0M931 793l2 0M940 792l2 0M922 743l2 0M934 741l2 0" stroke="#f0982c" />

      <path d="M795 726L802 725V831L795 832z" fill="#b8b7aa" />
      <path d="M800 725v106" strokeWidth="2" />
      <path d="M890 714L896 713V820L890 821z" fill="#b5aa98" />
      <path d="M893 714v106" />
      <path d="M645 744h12v105l-8 2-4-2z" fill="#b3ac99" />
      <path d="M648 745v104M650 745v104M653 745v103" />

      {/* right wing, shaded side */}
      <path d="M981 703L1152 729V834L981 808z" fill="url(#wallD)" />
      <path d="M981 804L1150 830" fill="none" />
      <path d="M1032 717L1149 734V826L1032 808z" fill="#8e8c7b" strokeWidth="1.5" />
      <path d="M1036 786L1060 785 1120 791 1149 785V825L1036 808z" fill="#7b786a" stroke="none" />
      <path d="M1054 722L1100 729V791L1054 785z" fill="#4d4642" stroke="none" />
      <path d="M1056 727L1077 730V788L1056 785z" fill="#78503f" strokeWidth="1.6" />
      <path d="M1092 728v62M1097 728v62" strokeWidth="1.4" />
      <path d="M1103 729L1114 731V793L1103 791z" fill="#47423e" stroke="none" />
      <path d="M1069 724v91M1104 729v90M1114 731v62M1120 732v61" />
      <path d="M1137 733v90" strokeWidth="2" />
      <path d="M1035 717v91" strokeWidth="3" />
      <path d="M1034 808L1149 826" strokeWidth="2.4" />

      {/* right wing, lit side */}
      <path d="M1152 729L1346 705V812L1152 834z" fill="#a09e91" />
      <path d="M1161 829L1346 807" fill="none" />
      <path d="M1161 734L1298 717V808L1161 825z" fill="#7b786a" strokeWidth="1.5" />
      <path d="M1161 735L1212 728V808L1161 801z" fill="#4d4743" stroke="none" />
      <path d="M1212 728L1221 727V808L1212 807z" fill="#a5a091" />
      <path d="M1221 727L1293 718V760L1221 749z" fill="#c6c6c6" stroke="none" />
      <path d="M1221 749L1293 760V795L1221 784z" fill="#c9bda7" stroke="none" />
      <path d="M1218 749L1293 760" />
      <path d="M1218 784L1293 795V800L1218 789z" fill="#4d4743" strokeWidth="1.5" />
      <path d="M1182 732v90M1220 727v88" strokeWidth="1.6" />
      <path d="M1258 722v90M1223 727v60" strokeWidth="2" />
      <path d="M1295 718v90" strokeWidth="4" />
      <path d="M1162 825L1298 808" strokeWidth="2.4" />
      <path d="M1340 706v106" strokeWidth="1.6" />
      <path d="M1149 730h12v103l-6 2-6-1z" fill="#b9ad98" />
      <path d="M1153 731v103M1156 731v103M1158 731v103" />

      {/* roof */}
      <path d="M445 698L659 612 649 729z" fill="url(#hip)" />
      <path d="M659 612L991 572 979 688 649 729z" fill="url(#roofF)" />
      <path d="M991 572L999 569 1163 594 1152 714 979 688z" fill="#2a2a27" />
      <path d="M1163 594L1386 685 1152 714z" fill="url(#roofR)" />
      <path d="M445 698L649 729V744L445 713z" fill="url(#fasL)" />
      <path d="M649 729L979 688 981 703 649 744z" fill="url(#fasF)" />
      <path d="M979 688L1152 714V729L981 703z" fill="url(#fasM)" />
      <path d="M1152 714L1386 685V700L1152 729z" fill="url(#fasR)" />
      <g stroke="none" fill="#111">
        {[[996, 648], [1003, 646], [1008, 652], [999, 656], [1012, 663], [1003, 668], [995, 674], [1008, 682], [1016, 676], [992, 681]].map(
          ([x, y]) => <rect key={x + "-" + y} x={x} y={y} width="1" height="1" />
        )}
      </g>
      <path d="M1353 706l27 4M1330 814l14 2M1353 817l27 4" />

      {/* level marker */}
      <path d="M343 716l17-2M364 713l18-3M393 709l32-4M436 704l9-1" />
      <ellipse cx="334" cy="717" rx="8" ry="11" fill="#c4c5c5" stroke="#123f8f" />
      <path d="M334 706a8 11 0 0 1 8 11h-8zM334 728a8 11 0 0 1-8-11h8z" fill="#123f8f" stroke="none" />
      <g stroke="none" fontFamily="Liberation Sans, sans-serif" fontSize="10">
        <path d="M350 699l30-4v12l-30 4zM350 718l18-2v13l-18 2z" fill="#f6f6f6" />
        <text x="350" y="709" transform="rotate(-6 350 709)">Level 2</text>
        <text x="350" y="729" transform="rotate(-6 350 729)">4.00</text>
      </g>
    </svg>
  );
}

function ViewCube() {
  return (
    <Cube width="140" height="80" viewBox="1472 305 140 80" aria-label="View cube" fill="none" stroke="#8f8f89">
      <ellipse cx="1542" cy="365" rx="67" ry="15" strokeDasharray="9 2 3 2" />
      <ellipse cx="1542" cy="365" rx="51" ry="10" strokeDasharray="14 2" />
      <ellipse cx="1542" cy="363" rx="38" ry="7" fill="#a9a9a9" fillOpacity="0.6" stroke="none" />
      <path d="M1508 311l32 3v52l-32-8z" fill="#e2e2e2" />
      <path d="M1540 314l36-3v47l-36 8z" fill="#dcdcdc" />
      <path d="M1508 311l34-2 34 2-36 3z" fill="#efefef" />
      <g fill="#94948c" stroke="none" fontFamily="Liberation Sans, sans-serif" fontWeight="700">
        <text transform="translate(1515 340) skewY(6)" fontSize="8">LEFT</text>
        <text transform="translate(1545 343) skewY(-6)" fontSize="8">FRONT</text>
      </g>
    </Cube>
  );
}

function Navigation() {
  return (
    <NavBar>
      <Plain aria-label="Close">
        <svg width="9" height="9" viewBox="0 0 9 9"><circle cx="4.5" cy="4.5" r="4" fill="#9a9a98" /><path d="M3 3l3 3M6 3L3 6" stroke="#fff" /></svg>
      </Plain>
      <Plain aria-label="Steering wheel">
        <svg width="24" height="24" viewBox="0 0 24 24" fill="#e9e9e9" stroke="#92928e">
          <path d="M12 1h10v11a10 10 0 1 1-10-11z" />
          <circle cx="12" cy="12" r="9" />
          <circle cx="12" cy="12" r="6" />
          <path d="M8 17l-3 3M16 17l3 3" />
        </svg>
      </Plain>
      <Tri size={6} color="#8d8d89" />
      <hr />
      <Plain aria-label="Zoom">
        <svg width="18" height="18" viewBox="0 0 18 18"><path d="M1 1h11v11H1z" fill="#b3ab98" stroke="#99948a" /><circle cx="11" cy="11" r="4" fill="#e6e6e6" stroke="#8d8d89" /><path d="M14 14l3 3" stroke="#8d8d89" strokeWidth="2" /></svg>
      </Plain>
      <Tri size={6} color="#8d8d89" />
      <Plain aria-label="Options">
        <svg width="9" height="9" viewBox="0 0 9 9"><circle cx="4.5" cy="4.5" r="4" fill="#9a9a98" /><path d="M2 4h5M3 6h3" stroke="#fff" /></svg>
      </Plain>
    </NavBar>
  );
}

function Browser() {
  return (
    <Panel $w={262}>
      <PanelHead $end={4}>
        <span>Project Browser - تمرين 11.rte</span>
        <Plain aria-label="Close"><Cross /></Plain>
      </PanelHead>
      <Tree>
        {tree.map(([guides, name, icon], i) => (
          <TreeRow key={i}>
            {[...guides].map((g, k) => <Guide key={k} type={g} last={k === guides.length - 1} />)}
            {icon && <Icon name={icon} size={20} />}
            <TreeName $picked={i === 2}>{name}</TreeName>
          </TreeRow>
        ))}
      </Tree>
      <BrowserFoot><ScrollThumb $w={211} /></BrowserFoot>
    </Panel>
  );
}

export default function App() {
  return (
    <Page>
      <GlobalStyle />
      <TitleBar>
        <Tools>
          <Logo aria-label="Revit">
            <svg width="27" height="28" viewBox="0 0 27 28">
              <path d="M1 3l5-2v27l-5-2z" fill="#5b9bd8" />
              <path d="M5 1h20v20H5z" fill="#2b84d8" />
              <path d="M5 20h21v8H5z" fill="#0c3f86" />
              <path d="M12 16V6h4c4 0 4 5 0 5h-4M15 11l4 5" fill="none" stroke="#fff" strokeWidth="2.2" />
            </svg>
          </Logo>
          <StartTool aria-label="start"><Icon name="start" size={22} /></StartTool>
          {quick.map((q, i) => {
            if (q === "|") return <Split key={i} />;
            if (q === "v") return <Tool key={i} $w={15} aria-label="more"><Tri size={7} /></Tool>;
            return <Tool key={i} aria-label={q}><Icon name={q} size={22} /></Tool>;
          })}
          <Tool $w={20} aria-label="Customize">
            <svg width="12" height="11" viewBox="0 0 12 11"><path d="M1 1.5h10" stroke="#333" strokeWidth="2" /><path d="M1 5h10l-5 5z" fill="#333" /></svg>
          </Tool>
        </Tools>
        <Title>{"Autodesk Revit 2023 - تمرين 11.rte - 3D View: {3D}"}</Title>
        <Tools>
          <Tool $w={16} aria-label="Collapse"><svg width="6" height="10" viewBox="0 0 6 10"><path d="M6 0v10L0 5z" fill="#333" /></svg></Tool>
          <Tool aria-label="Search"><Icon name="binoculars" size={22} /></Tool>
          <Tool aria-label="Account"><Icon name="user" size={22} /></Tool>
          <UserName>▯돤翼</UserName>
          <Tool $w={15} aria-label="Account menu"><Tri size={7} /></Tool>
          <Tool $w={36} aria-label="Store"><Icon name="cart" size={22} /></Tool>
          <Split />
          <Tool $w={34} aria-label="Help"><Icon name="help" size={24} /></Tool>
          <Tool $w={14} aria-label="Help menu"><Tri size={7} /></Tool>
          <WindowButtons>
            <Plain aria-label="Minimize"><svg width="14" height="14" viewBox="0 0 14 14"><path d="M1 11h11" stroke="#222" strokeWidth="3" /></svg></Plain>
            <Plain aria-label="Restore">
              <svg width="16" height="14" viewBox="0 0 16 14"><path d="M5 4V1h10v8h-4" fill="none" stroke="#222" strokeWidth="1.6" /><path d="M1 5h10v8H1z" fill="none" stroke="#222" strokeWidth="1.6" /><path d="M1 6h10M5 2h10" stroke="#222" strokeWidth="2.4" /></svg>
            </Plain>
            <Plain aria-label="Close"><Cross /></Plain>
          </WindowButtons>
        </Tools>
      </TitleBar>

      <TabRow>
        <FileTab>File</FileTab>
        {tabs.map((t, i) => <RibbonTab key={t} $active={i === 0} $wide={i > 6}>{t}</RibbonTab>)}
        <RibbonTab aria-label="Minimize ribbon">
          <svg width="56" height="14" viewBox="0 0 56 14"><rect x="19" y="2" width="17" height="10" rx="3" fill="#ddd" stroke="#555" strokeWidth="1.5" /><path d="M24 9h7l-3-4zM44 5h7l-3 4z" fill="#222" /></svg>
        </RibbonTab>
      </TabRow>

      <Ribbon>
        <Group $w={73}>
          <GroupBody>
            <ModifyButton $w={53}>
              <svg width="40" height="40" viewBox="0 0 42 42" fill="none">{big.modify}</svg>
              <BigLabel>Modify</BigLabel>
            </ModifyButton>
          </GroupBody>
          <GroupName>Select <Tri size={9} /></GroupName>
        </Group>
        <Group $w={702}>
          <GroupBody>{build.map((b) => <Big key={b[0]} item={b} />)}</GroupBody>
          <GroupName>Build</GroupName>
        </Group>
        <Group $w={177}>
          <GroupBody>{circulation.map((b) => <Big key={b[0]} item={b} />)}</GroupBody>
          <GroupName>Circulation</GroupName>
        </Group>
        <Group $w={173}>
          <GroupBody>{model.map((b) => <Big key={b[0]} item={b} />)}</GroupBody>
          <GroupName>Model</GroupName>
        </Group>
        <Group $w={336}>
          <GroupBody>
            {room.map((b) => <Big key={b[0]} item={b} />)}
            <Stack $ml={1}>
              <Small icon="area" label="Area " drop />
              <Small icon="areaBoundary" label="Area  Boundary" off />
              <Small icon="tagArea" label="Tag  Area " drop />
            </Stack>
          </GroupBody>
          <GroupName>Room &amp; Area <Tri size={9} /></GroupName>
        </Group>
        <Group $w={191}>
          <GroupBody>
            <Big item={["byFace", "By\nFace", 52]} />
            <Big item={["shaft", "Shaft", 44]} />
            <Stack $ml={7}>
              <Small icon="openWall" label="Wall" />
              <Small icon="vertical" label="Vertical" />
              <Small icon="dormer" label="Dormer" />
            </Stack>
          </GroupBody>
          <GroupName>Opening</GroupName>
        </Group>
        <Group $w={80}>
          <GroupBody>
            <Stack $low>
              <Small icon="level" label="Level" off />
              <Small icon="grid" label="Grid" off />
            </Stack>
          </GroupBody>
          <GroupName>Datum</GroupName>
        </Group>
        <Group $w={160}>
          <GroupBody>
            <Big item={["set", "Set", 52, "down"]} />
            <Stack $ml={3}>
              <Small icon="show" label="Show" />
              <Small icon="refPlane" label="Ref  Plane" off />
              <Small icon="viewer" label="Viewer" />
            </Stack>
          </GroupBody>
          <GroupName>Work Plane</GroupName>
        </Group>
      </Ribbon>
      <OptionsBar />

      <Main>
        <Properties />
        <Doc>
          <DocTabs>
            <DocTab $active>
              <Plain><Icon name="house" />{"{3D}"}</Plain>
              <Plain aria-label="Close view"><Cross /></Plain>
            </DocTab>
            <DocTab>
              <Plain><Icon name="plan" />Level 1</Plain>
            </DocTab>
            <Right>
              <Tool $w={24} aria-label="Open views">
                <svg width="12" height="11" viewBox="0 0 12 11"><path d="M1 1.5h10" stroke="#333" strokeWidth="2" /><path d="M1 5h10l-5 5z" fill="#333" /></svg>
              </Tool>
            </Right>
          </DocTabs>
          <DocFrame>
            <Canvas>
              <House />
              <ViewCube />
              <Navigation />
            </Canvas>
            <SideScroll><ScrollThumb $h={21} /></SideScroll>
            <ViewBar>
              <span>1 : 100</span>
              {viewTools.map((t) => <ViewTool key={t} aria-label={t}><Icon name={t} size={20} /></ViewTool>)}
              <ScrollThumb $w={21} $m="0 0 0 446px" />
              <i>
                <svg width="12" height="12" viewBox="0 0 12 12"><path d="M8 0h3v3H8zM4 4h3v3H4zM8 4h3v3H8zM0 8h3v3H0zM4 8h3v3H4zM8 8h3v3H8z" fill="#bbb" /></svg>
              </i>
            </ViewBar>
          </DocFrame>
        </Doc>
        <Browser />
      </Main>

      <StatusBar>
        <Hint>Click to select, TAB for alternates, CTRL adds, SHIFT unselects.</Hint>
        <Tool aria-label="Worksets"><Icon name="people" size={22} /></Tool>
        <Picker $w={256} $h={24}>
          <select aria-label="Active workset"><option></option></select>
          <Chevron />
        </Picker>
        <Tool $w={34} aria-label="Requests"><Icon name="request" size={20} /></Tool>
        <Count $w={31}>:0</Count>
        <Tool aria-label="Design options"><Icon name="options" size={20} /></Tool>
        <Tool aria-label="Add to option"><Icon name="addOption" size={20} /></Tool>
        <Picker $w={256} $h={24} $dim>
          <select aria-label="Design option"><option>Main Model</option></select>
          <Chevron />
        </Picker>
        <Right>
          {["selLink", "selUnder", "selPin", "selFace", "selDrag", "gear", "filter"].map((t) => (
            <Tool key={t} aria-label={t}><Icon name={t} size={20} /></Tool>
          ))}
          <Count $w={78}>:0</Count>
        </Right>
      </StatusBar>
      <Watermark>خمسات</Watermark>
    </Page>
  );
}
